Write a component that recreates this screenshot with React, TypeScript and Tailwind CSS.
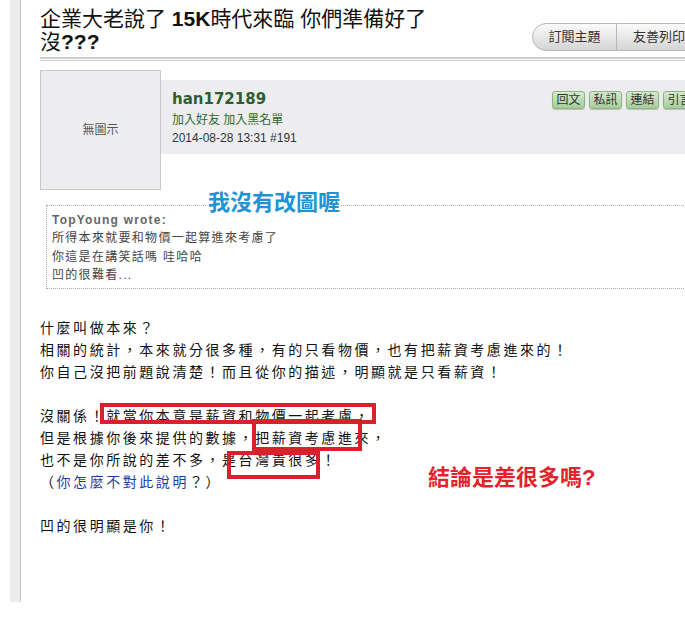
import React from "react";

const CJK = { fontFamily: '"Liberation Sans", "Noto Sans CJK TC", sans-serif' };

export default function App() {
  return (
    <div className="w-[685px] h-[617px] overflow-hidden bg-white flex items-start" style={CJK}>
      <div className="ml-[10px] w-[11px] h-[602px] shrink-0 bg-[#ececec] border-r border-[#c4c4c4]" />
      <div className="relative ml-[19px] w-[680px] shrink-0">
        {/* header */}
        <div className="flex pt-[7px] h-[52px] overflow-visible">
          <div className="w-[492px] shrink-0">
            <h1 className="max-w-[400px] text-[21px] leading-[23px] text-[#111]">
              企業大老說了 <span className="font-bold">15K</span>時代來臨 你們準備好了 沒<span className="font-bold">???</span>
            </h1>
          </div>
          <div className="flex mt-[16px] h-[28px]">
            <div className="w-[85px] h-[28px] flex items-center justify-center rounded-l-[14px] border border-[#b8b8b8] bg-gradient-to-b from-[#fbfbfb] to-[#d4d4d4] text-[13px] text-[#333]">
              訂閱主題
            </div>
            <div className="w-[85px] h-[28px] flex items-center justify-center border border-l-0 border-[#b8b8b8] bg-gradient-to-b from-[#fbfbfb] to-[#d4d4d4] text-[13px] text-[#333]">
              友善列印
            </div>
          </div>
        </div>
        {/* double line */}
        <div className="mt-[5px] h-[4px] border-t-2 border-b border-[#cfcfcf]" />

        {/* post row */}
        <div className="flex mt-[9px]">
          <div className="w-[121px] h-[120px] shrink-0 border border-[#c9c9c9] bg-[#ededef] flex items-center justify-center text-[12px] text-[#555]">
            無圖示
          </div>
          <div className="flex-1 mt-[10px] h-[74px] bg-[#ededef] flex">
            <div className="w-[380px] shrink-0 pl-[11px] pt-[9px]">
              <div className="text-[15px] leading-[20px] font-bold text-[#2f5d2f]" style={{ fontFamily: '"DejaVu Sans", sans-serif' }}>
                han172189
              </div>
              <div className="mt-[2px] text-[12px] leading-[18px] text-[#2f6a2f]">加入好友 加入黑名單</div>
              <div className="text-[12px] leading-[18px] text-[#333]">2014-08-28 13:31 #191</div>
            </div>
            <div className="flex gap-[4px] ml-[11px] mt-[11px] h-[18px]">
              {["回文", "私訊", "連結", "引言"].map((t) => (
                <div
                  key={t}
                  className="w-[33px] h-[18px] shrink-0 flex items-center justify-center rounded-[3px] border border-[#8db483] bg-gradient-to-b from-[#d5ebcf] to-[#a5cc9b] text-[12px] leading-none text-[#333] shadow-[0_1px_1px_rgba(0,0,0,0.2)]"
                >
                  {t}
                </div>
              ))}
            </div>
          </div>
        </div>

        {/* quote */}
        <div className="mt-[15px] ml-[6px] h-[84px] border border-dotted border-[#aaa] pl-[5px] pt-[5px]">
          <div className="text-[12px] leading-[18px] font-bold tracking-[1.2px] text-[#666]">TopYoung wrote:</div>
          <div className="text-[12px] leading-[18.5px] tracking-[1.3px] text-[#444]">
            <div>所得本來就要和物價一起算進來考慮了</div>
            <div>你這是在講笑話嗎 哇哈哈</div>
            <div>凹的很難看...</div>
          </div>
        </div>
        <span className="absolute left-[167px] top-[190px] px-[1px] bg-white/80 text-[22px] leading-[26px] font-bold text-[#1f93d6]">
          我沒有改圖喔
        </span>

        {/* body */}
        <div className="relative mt-[28px] text-[14px] leading-[22px] tracking-[2.55px] text-[#111]">
          <div>什麼叫做本來？</div>
          <div>相關的統計，本來就分很多種，有的只看物價，也有把薪資考慮進來的！</div>
          <div>你自己沒把前題說清楚！而且從你的描述，明顯就是只看薪資！</div>
          <div>&nbsp;</div>
          <div>沒關係！就當你本意是薪資和物價一起考慮，</div>
          <div>但是根據你後來提供的數據，把薪資考慮進來，</div>
          <div>也不是你所說的差不多，是台灣貴很多！</div>
          <div>
            （<span className="text-[#1f3f9f]">你怎麼不對此說明</span>？）
          </div>
          <div>&nbsp;</div>
          <div>凹的很明顯是你！</div>

          <div className="absolute left-[60px] top-[86px] w-[276px] h-[21px] border-[4px] border-[#d8212b]" />
          <div className="absolute left-[212px] top-[102px] w-[110px] h-[32px] border-[4px] border-[#d8212b]" />
          <div className="absolute left-[187px] top-[134px] w-[93px] h-[28px] border-[4px] border-[#d8212b]" />
          <div className="absolute left-[388px] top-[148px] text-[22px] leading-[26px] tracking-normal font-bold text-[#e1232c]">
            結論是差很多嗎?
          </div>
        </div>
      </div>
    </div>
  );
}
